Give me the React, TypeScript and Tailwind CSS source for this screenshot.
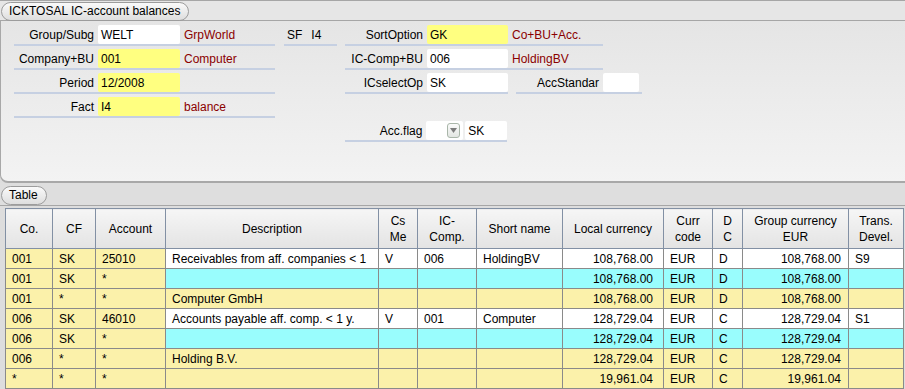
import React from 'react';

type Kind = 'white' | 'cyan' | 'yellow';

type Row = {
  co: string;
  cf: string;
  acc: string;
  desc?: string;
  cs?: string;
  ic?: string;
  short?: string;
  local: string;
  cur: string;
  dc: string;
  group: string;
  trans?: string;
  kind: Kind;
};

const rows: Row[] = [
  { co: '001', cf: 'SK', acc: '25010', desc: 'Receivables from aff. companies < 1', cs: 'V', ic: '006', short: 'HoldingBV', local: '108,768.00', cur: 'EUR', dc: 'D', group: '108,768.00', trans: 'S9', kind: 'white' },
  { co: '001', cf: 'SK', acc: '*', local: '108,768.00', cur: 'EUR', dc: 'D', group: '108,768.00', kind: 'cyan' },
  { co: '001', cf: '*', acc: '*', desc: 'Computer GmbH', local: '108,768.00', cur: 'EUR', dc: 'D', group: '108,768.00', kind: 'yellow' },
  { co: '006', cf: 'SK', acc: '46010', desc: 'Accounts payable aff. comp. < 1 y.', cs: 'V', ic: '001', short: 'Computer', local: '128,729.04', cur: 'EUR', dc: 'C', group: '128,729.04', trans: 'S1', kind: 'white' },
  { co: '006', cf: 'SK', acc: '*', local: '128,729.04', cur: 'EUR', dc: 'C', group: '128,729.04', kind: 'cyan' },
  { co: '006', cf: '*', acc: '*', desc: 'Holding B.V.', local: '128,729.04', cur: 'EUR', dc: 'C', group: '128,729.04', kind: 'yellow' },
  { co: '*', cf: '*', acc: '*', local: '19,961.04', cur: 'EUR', dc: 'C', group: '19,961.04', kind: 'yellow' },
];

const restBg: Record<Kind, string> = {
  white: 'bg-white',
  cyan: 'bg-[#99fdfd]',
  yellow: 'bg-[#fbf1aa]',
};

function Tab({ label, className }: { label: string; className?: string }) {
  return (
    <div
      className={`h-[19px] rounded-full border border-[#9c9c9c] bg-gradient-to-b from-[#fafafa] to-[#dedede] px-[7px] leading-[17px] text-black ${className ?? ''}`}
    >
      {label}
    </div>
  );
}

function Field({
  label,
  value,
  note,
  yellow,
  labelW = 80,
  inputW = 82,
  width,
}: {
  label: string;
  value: string;
  note?: string;
  yellow?: boolean;
  labelW?: number;
  inputW?: number;
  width: number;
}) {
  return (
    <div className="flex h-[22px] items-start border-b-2 border-[#c6d0e2]" style={{ width }}>
      <div className="mt-[1px] pt-[1px] text-right leading-[19px]" style={{ width: labelW }}>
        {label}
      </div>
      <div
        className={`ml-[4px] mt-[1px] h-[19px] rounded-[2px] px-[3px] pt-[1px] leading-[18px] ${yellow ? 'bg-[#ffff80]' : 'bg-white'}`}
        style={{ width: inputW }}
      >
        {value}
      </div>
      {note && <div className="ml-[4px] mt-[1px] pt-[1px] leading-[19px] text-[#8b0000]">{note}</div>}
    </div>
  );
}

function Form() {
  return (
    <div className="flex pl-[13px] pt-[3px]">
      {/* left column */}
      <div className="flex w-[261px] flex-col gap-[2px]">
        <Field label="Group/Subg" value="WELT" note="GrpWorld" width={261} />
        <Field label="Company+BU" value="001" note="Computer" yellow width={261} />
        <Field label="Period" value="12/2008" yellow width={261} />
        <Field label="Fact" value="I4" note="balance" yellow width={261} />
      </div>

      {/* SF */}
      <div className="ml-[9px] flex h-[22px] w-[53px] items-start gap-[9px] border-b-2 border-[#c6d0e2] pl-[3px] pt-[1px] leading-[19px]">
        <span className="mt-[1px]">SF</span>
        <span className="mt-[1px]">I4</span>
      </div>

      {/* right column */}
      <div className="ml-[8px] flex flex-col gap-[2px]">
        <Field label="SortOption" value="GK" note="Co+BU+Acc." yellow labelW={78} inputW={81} width={258} />
        <Field label="IC-Comp+BU" value="006" note="HoldingBV" labelW={78} inputW={81} width={258} />
        <div className="flex gap-[8px]">
          <Field label="ICselectOp" value="SK" labelW={78} inputW={81} width={163} />
          <Field label="AccStandar" value="" labelW={83} inputW={36} width={126} />
        </div>
        <div className="h-[22px]" />
        <div className="flex h-[22px] w-[162px] items-start border-b-2 border-[#c6d0e2]">
          <div className="mt-[1px] w-[78px] pt-[1px] text-right leading-[19px]">Acc.flag</div>
          <div className="ml-[4px] mt-[1px] flex h-[19px] w-[37px] items-center justify-end rounded-[2px] bg-white pr-[3px]">
            <div className="flex h-[15px] w-[13px] items-center justify-center rounded-[3px] border border-[#a9b6a9] bg-gradient-to-b from-[#fbfbfb] to-[#e2e6e2]">
              <svg width="7" height="5" viewBox="0 0 7 5">
                <path d="M0 0 L7 0 L3.5 5 Z" fill="#7c7c7c" />
              </svg>
            </div>
          </div>
          <div className="ml-[2px] mt-[1px] h-[19px] w-[42px] rounded-[2px] bg-white px-[3px] pt-[1px] leading-[18px]">SK</div>
        </div>
      </div>
    </div>
  );
}

const head = 'border border-[#8290a4] bg-gradient-to-b from-[#f6f6f6] to-[#e3e3e3] text-center font-normal leading-[16px] text-black';
const cell = 'h-[20px] border border-[#8a8a8a] px-[6px] leading-[18px] whitespace-nowrap overflow-hidden';

function DataTable() {
  return (
    <table className="table-fixed border-collapse" style={{ width: 898 }}>
      <colgroup>
        {[47, 43, 70, 213, 39, 59, 86, 101, 49, 30, 106, 55].map((w, i) => (
          <col key={i} style={{ width: w }} />
        ))}
      </colgroup>
      <thead>
        <tr className="h-[40px]">
          <th className={head}>Co.</th>
          <th className={head}>CF</th>
          <th className={head}>Account</th>
          <th className={head}>Description</th>
          <th className={head}>
            Cs
            <br />
            Me
          </th>
          <th className={head}>
            IC-
            <br />
            Comp.
          </th>
          <th className={head}>Short name</th>
          <th className={head}>Local currency</th>
          <th className={head}>
            Curr
            <br />
            code
          </th>
          <th className={head}>
            D
            <br />C
          </th>
          <th className={head}>
            Group currency
            <br />
            EUR
          </th>
          <th className={head}>
            Trans.
            <br />
            Devel.
          </th>
        </tr>
      </thead>
      <tbody>
        {rows.map((r, i) => {
          const bg = restBg[r.kind];
          return (
            <tr key={i}>
              <td className={`${cell} bg-[#fbf1aa]`}>{r.co}</td>
              <td className={`${cell} bg-[#fbf1aa]`}>{r.cf}</td>
              <td className={`${cell} bg-[#fbf1aa]`}>{r.acc}</td>
              <td className={`${cell} ${bg}`}>{r.desc}</td>
              <td className={`${cell} ${bg}`}>{r.cs}</td>
              <td className={`${cell} ${bg}`}>{r.ic}</td>
              <td className={`${cell} ${bg}`}>{r.short}</td>
              <td className={`${cell} ${bg} pr-[10px] text-right`}>{r.local}</td>
              <td className={`${cell} ${bg}`}>{r.cur}</td>
              <td className={`${cell} ${bg}`}>{r.dc}</td>
              <td className={`${cell} ${bg} pr-[7px] text-right`}>{r.group}</td>
              <td className={`${cell} ${bg}`}>{r.trans}</td>
            </tr>
          );
        })}
      </tbody>
    </table>
  );
}

export default function App() {
  return (
    <div className="h-[389px] w-[905px] overflow-hidden bg-[#dddddd] font-['Liberation_Sans',Arial,sans-serif] text-[12px] text-black">
      {/* title strip */}
      <div className="h-[21px] border-y border-[#a6a6a6] bg-[#e6e6e6] pl-[1px] pt-[1px]">
        <Tab label="ICKTOSAL IC-account balances" className="w-[188px]" />
      </div>

      {/* form panel */}
      <div className="h-[162px] rounded-bl-[8px] border-b-2 border-l border-[#a8a8a8] bg-gradient-to-b from-[#e5e5e5] to-[#f3f3f3]">
        <Form />
      </div>

      {/* table tab strip */}
      <div className="h-[23px] border-b border-[#a6a6a6] bg-[#dedede] pl-[1px] pt-[3px]">
        <Tab label="Table" className="w-[46px]" />
      </div>

      {/* table */}
      <div className="pl-[5px] pt-[2px]">
        <DataTable />
      </div>
    </div>
  );
}
